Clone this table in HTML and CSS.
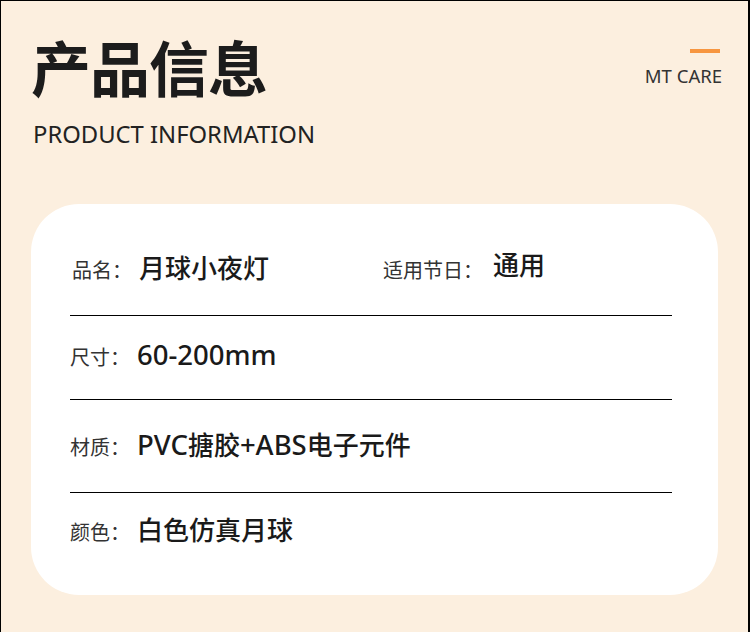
FILE: index.html
```html
<!DOCTYPE html>
<html lang="zh">
<head>
<meta charset="utf-8">
<link rel="stylesheet" href="styles.css">
</head>
<body>
<div class="frame">
  <header class="head">
    <div class="head-left">
      <h1 class="title">产品信息</h1>
      <p class="subtitle">PRODUCT INFORMATION</p>
    </div>
    <div class="brand">
      <span class="brand-bar"></span>
      <span class="brand-name">MT CARE</span>
    </div>
  </header>
  <section class="card">
    <div class="row row-1">
      <div class="field field-name"><span class="label">品名：</span><span class="value">月球小夜灯</span></div>
      <div class="field"><span class="label label-wide">适用节日：</span><span class="value value-up">通用</span></div>
    </div>
    <div class="row row-2">
      <div class="field"><span class="label">尺寸：</span><span class="value"><span class="latin">60-200mm</span></span></div>
    </div>
    <div class="row row-3">
      <div class="field"><span class="label">材质：</span><span class="value"><span class="latin">PVC</span>搪胶<span class="latin">+ABS</span>电子元件</span></div>
    </div>
    <div class="row row-4">
      <div class="field"><span class="label">颜色：</span><span class="value">白色仿真月球</span></div>
    </div>
  </section>
</div>
</body>
</html>
```
FILE: styles.css
```css
* { box-sizing: border-box; margin: 0; padding: 0; }
html, body { width: 750px; height: 632px; overflow: hidden; }
body {
  font-family: "Noto Sans", "Noto Sans CJK SC", sans-serif;
  background: #fcefdf;
  color: #1c1c1c;
}
.frame {
  width: 750px;
  height: 632px;
  border-top: 1px solid #000;
  border-left: 1px solid #000;
  border-right: 2px solid #000;
  background: #fcefdf;
  padding: 0 0 0 30px;
}
.head {
  display: flex;
  justify-content: space-between;
  height: 203px;
  padding-right: 26px;
}
.head-left { padding-top: 35px; }
.title {
  font-family: "Noto Sans CJK SC", sans-serif;
  font-size: 60px;
  line-height: 60px;
  font-weight: 700;
  letter-spacing: -1px;
  color: #1c1c1c;
}
.subtitle {
  margin-top: 23px;
  padding-left: 2px;
  font-size: 23.8px;
  line-height: 30px;
  font-weight: 400;
  color: #222;
}
.brand {
  display: flex;
  flex-direction: column;
  align-items: flex-end;
  padding-top: 48px;
}
.brand-bar {
  width: 30px;
  height: 4px;
  background: #f79640;
  margin-right: 2px;
}
.brand-name {
  margin-top: 11px;
  font-size: 18.5px;
  line-height: 24px;
  color: #333;
}
.card {
  width: 687px;
  background: #fff;
  border-radius: 48px;
  padding: 22px 46px 25px 39px;
}
.row {
  display: flex;
  align-items: center;
  border-bottom: 1px solid #000;
  padding-bottom: 6px;
}
.row-1 { height: 90px; padding-bottom: 8px; }
.row-2 { height: 84px; }
.row-3 { height: 93px; padding-bottom: 4px; }
.row-4 { height: 77px; border-bottom: none; }
.field {
  display: flex;
  align-items: baseline;
}
.field-name { width: 313px; padding-left: 2px; }
.label {
  font-family: "Noto Sans CJK SC", sans-serif;
  font-size: 20px;
  color: #333;
  margin-right: 7px;
}
.label-wide { margin-right: 10px; }
.value {
  font-size: 26px;
  font-weight: 500;
  color: #1a1a1a;
}
.latin { font-size: 27.5px; font-weight: 500; }
.value-up { position: relative; top: -3px; }
```
